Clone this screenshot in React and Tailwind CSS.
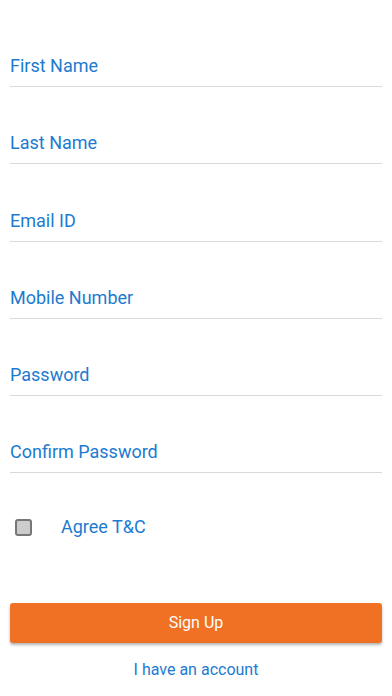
export default function App() {
  const fields = [
    "First Name",
    "Last Name",
    "Email ID",
    "Mobile Number",
    "Password",
    "Confirm Password",
  ];

  return (
    <div
      className="h-[696px] w-[392px] bg-white px-[10px] pt-[10px]"
      style={{ fontFamily: "Roboto, 'Liberation Sans', sans-serif" }}
    >
      {fields.map((label) => (
        <div
          key={label}
          className="flex h-[77.2px] items-end border-b border-[#d9d9d9] pb-[8px]"
        >
          <span className="text-[18px] leading-[24px] text-[#1c7bd0]">{label}</span>
        </div>
      ))}

      <div className="mt-[42px] flex items-center">
        <div className="ml-[5px] h-[17px] w-[17px] rounded-[3px] border-2 border-[#777777] bg-[#cccccc]" />
        <span className="ml-[29px] text-[18px] leading-[24px] text-[#1c7bd0]">Agree T&amp;C</span>
      </div>

      <button className="mt-[64px] flex h-[40px] w-full items-center justify-center rounded-[3px] bg-[#f07124] text-[16px] font-normal text-white shadow-[0_2px_3px_rgba(0,0,0,0.3)]">
        Sign Up
      </button>

      <div className="mt-[17px] text-center text-[16px] leading-[20px] text-[#1c7bd0]">
        I have an account
      </div>
    </div>
  );
}
